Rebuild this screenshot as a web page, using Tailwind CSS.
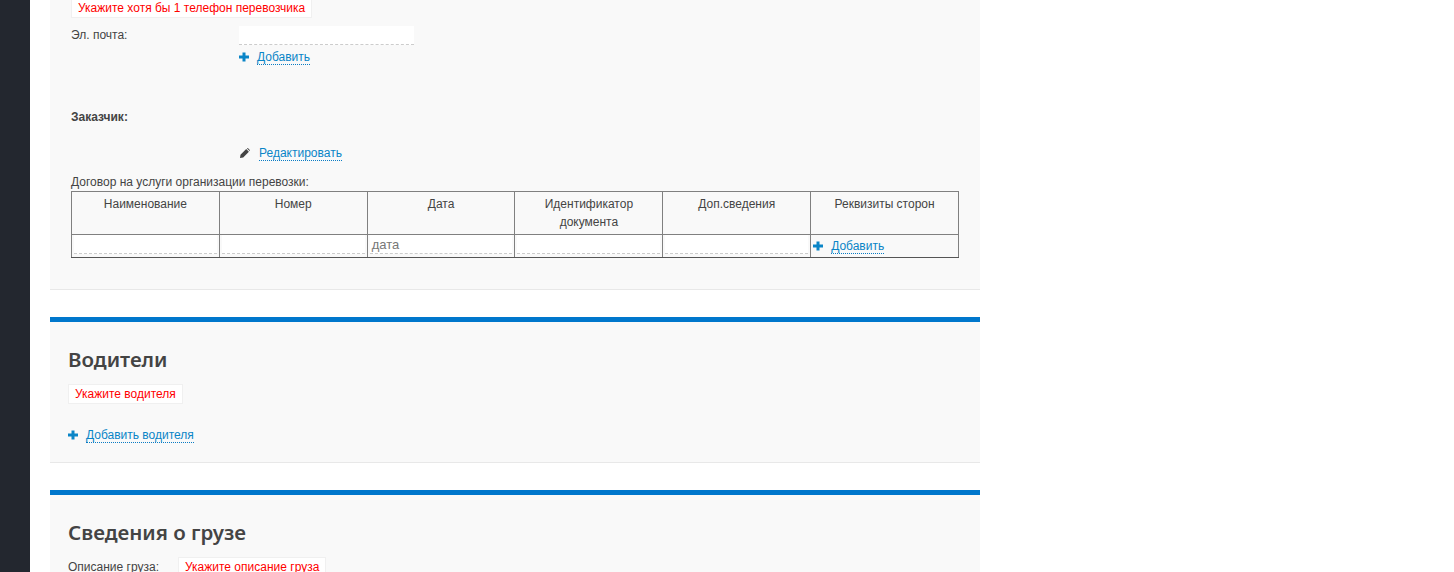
<!DOCTYPE html>
<html lang="ru">

    <head>
        <meta charset="UTF-8">
        <script src="https://cdn.jsdelivr.net/npm/@tailwindcss/browser@4"></script>
        <title>Заявка</title>
    </head>

    <body class="bg-white">
        <div class="flex h-[572px] overflow-hidden font-['Liberation_Sans',Arial,sans-serif] text-[12px] leading-[18px] text-[#444]">
            <div class="w-[30px] shrink-0 bg-[#23272f]"></div>
            <div class="ml-[20px] w-[930px] shrink-0">

                <!-- перевозчик -->
                <section class="-mt-[3px] h-[293px] border-b border-[#e8e8e8] bg-[#f9f9f9] pl-[21px] pr-[21px] pt-px">
                    <div class="h-[20px] w-fit border border-[#f0f0f0] bg-white px-[6px] text-[#f00]">Укажите хотя бы 1 телефон перевозчика</div>
                    <div class="mt-[8px] flex">
                        <div class="w-[168px]">Эл. почта:</div>
                        <div>
                            <div class="h-[19px] w-[175px] border-b border-dashed border-[#ccc] bg-white"></div>
                            <div class="mt-[3px] flex h-[18px] items-center">
                                <svg class="mr-2 h-[10px] w-[10px] fill-[#0a85c7]" viewBox="0 0 10 10"><path d="M3.5 .5h3v3H10v3H6.500v3h-3v-3H0v-3h3.500z"/></svg>
                                <a class="border-b border-dotted border-[#0a7cc4] leading-[14px] text-[#0a85c7]">Добавить</a>
                            </div>
                        </div>
                    </div>
                    <div class="mt-[42px] font-bold">Заказчик:</div>
                    <div class="mt-[18px] ml-[168px] flex h-[18px] items-center">
                        <svg class="ml-px mr-[9px] h-[10px] w-[10px] fill-[#444]" viewBox="0 0 10 10"><path d="M0 10l.5-3.200L6.200 1.100l2.700 2.700L3.200 9.500zM7 .4l.3-.2c.3-.2.6-.2.8 0l1.700 1.700c.2.2.2.5 0 .8l-.2.3z"/></svg>
                        <a class="border-b border-dotted border-[#0a7cc4] leading-[14px] text-[#0a85c7]">Редактировать</a>
                    </div>
                    <div class="mt-[12px] leading-[16px]">Договор на услуги организации перевозки:</div>
                    <table class="mt-[1px] w-[888px] table-fixed border-collapse border border-[#808080] border-b-[#555]">
                        <thead>
                            <tr class="h-[43px] align-top">
                                <th class="border border-[#808080] pt-[3px] font-normal">Наименование</th>
                                <th class="border border-[#808080] pt-[3px] font-normal">Номер</th>
                                <th class="border border-[#808080] pt-[3px] font-normal">Дата</th>
                                <th class="border border-[#808080] pt-[3px] font-normal">Идентификатор документа</th>
                                <th class="border border-[#808080] pt-[3px] font-normal">Доп.сведения</th>
                                <th class="border border-[#808080] pt-[3px] font-normal">Реквизиты сторон</th>
                            </tr>
                        </thead>
                        <tbody>
                            <tr class="h-[23px]">
                                <td class="border border-[#808080] border-b-[#555] p-0 align-top"><div class="mx-[2px] h-[19px] border-b border-dashed border-[#ccc] bg-white"></div></td>
                                <td class="border border-[#808080] border-b-[#555] p-0 align-top"><div class="mx-[2px] h-[19px] border-b border-dashed border-[#ccc] bg-white"></div></td>
                                <td class="border border-[#808080] border-b-[#555] p-0 align-top"><div class="mx-[2px] h-[19px] border-b border-dashed border-[#ccc] bg-white pl-[2px] text-[13px] leading-[19px] text-[#777]">дата</div></td>
                                <td class="border border-[#808080] border-b-[#555] p-0 align-top"><div class="mx-[2px] h-[19px] border-b border-dashed border-[#ccc] bg-white"></div></td>
                                <td class="border border-[#808080] border-b-[#555] p-0 align-top"><div class="mx-[2px] h-[19px] border-b border-dashed border-[#ccc] bg-white"></div></td>
                                <td class="border border-[#808080] border-b-[#555] p-0 align-top">
                                    <div class="flex h-[21px] items-center pl-[2px] pt-[1px]">
                                        <svg class="mr-2 h-[10px] w-[10px] fill-[#0a85c7]" viewBox="0 0 10 10"><path d="M3.5 .5h3v3H10v3H6.500v3h-3v-3H0v-3h3.500z"/></svg>
                                        <a class="border-b border-dotted border-[#0a7cc4] leading-[14px] text-[#0a85c7]">Добавить</a>
                                    </div>
                                </td>
                            </tr>
                        </tbody>
                    </table>
                </section>

                <!-- водители -->
                <section class="mt-[27px] h-[146px] border-t-[5px] border-b border-t-[#0077cc] border-b-[#e8e8e8] bg-[#f9f9f9] pl-[18px]">
                    <h2 class="pt-[23px] font-['Noto_Sans',sans-serif] text-[20.5px] leading-[28px] font-semibold text-[#444]">Водители</h2>
                    <div class="mt-[11px] h-[20px] w-fit border border-[#f0f0f0] bg-white px-[6px] text-[#f00]">Укажите водителя</div>
                    <div class="mt-[22px] flex h-[18px] items-center">
                        <svg class="mr-2 h-[10px] w-[10px] fill-[#0a85c7]" viewBox="0 0 10 10"><path d="M3.5 .5h3v3H10v3H6.500v3h-3v-3H0v-3h3.500z"/></svg>
                        <a class="border-b border-dotted border-[#0a7cc4] leading-[14px] text-[#0a85c7]">Добавить водителя</a>
                    </div>
                </section>

                <!-- груз -->
                <section class="mt-[27px] h-[100px] border-t-[5px] border-t-[#0077cc] bg-[#f9f9f9] pl-[18px]">
                    <h2 class="pt-[23px] font-['Noto_Sans',sans-serif] text-[20.5px] leading-[28px] font-semibold text-[#444]">Сведения о грузе</h2>
                    <div class="mt-[11px] flex items-start">
                        <div class="w-[110px] pt-[1px]">Описание груза:</div>
                        <div class="h-[20px] border border-[#f0f0f0] bg-white px-[6px] text-[#f00]">Укажите описание груза</div>
                    </div>
                </section>
            </div>
        </div>
    </body>

</html>
